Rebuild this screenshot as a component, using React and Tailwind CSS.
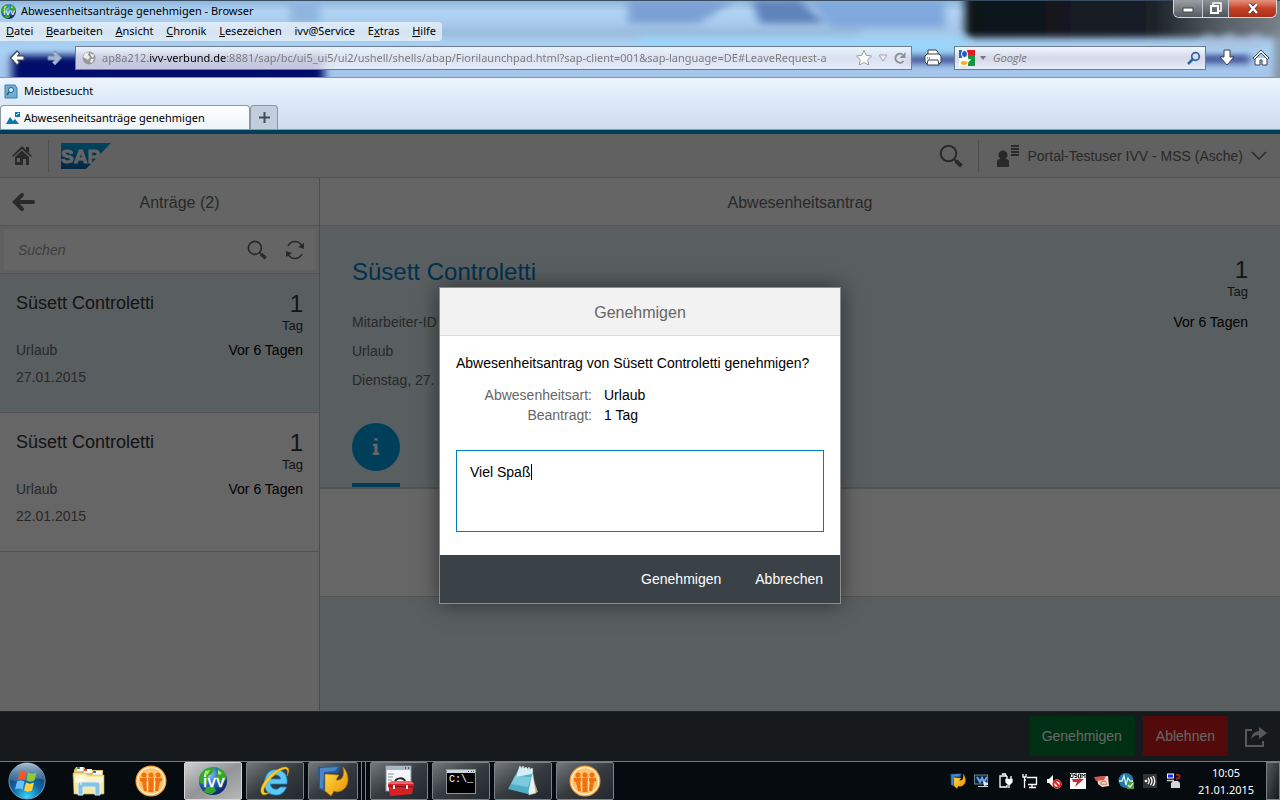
const menu = [
  ["", "D", "atei"],
  ["", "B", "earbeiten"],
  ["", "A", "nsicht"],
  ["", "C", "hronik"],
  ["", "L", "esezeichen"],
  ["ivv@Service", "", ""],
  ["E", "x", "tras"],
  ["", "H", "ilfe"],
];

const requests = [
  { name: "Süsett Controletti", days: "1", unit: "Tag", type: "Urlaub", age: "Vor 6 Tagen", date: "27.01.2015", selected: true },
  { name: "Süsett Controletti", days: "1", unit: "Tag", type: "Urlaub", age: "Vor 6 Tagen", date: "22.01.2015", selected: false },
];

function Globe({ size }) {
  return (
    <svg width={size} height={size} viewBox="0 0 32 32" aria-hidden="true">
      <defs>
        <radialGradient id="globeSea" cx="0.35" cy="0.25" r="0.8">
          <stop offset="0" stopColor="#9fd4ff" />
          <stop offset="0.45" stopColor="#2169c4" />
          <stop offset="1" stopColor="#0a2260" />
        </radialGradient>
      </defs>
      <circle cx="16" cy="16" r="14" fill="url(#globeSea)" />
      <path d="M6 6C10 2 15 2 17 4L15 9L11 11L12 16L8 20L3 18C1 14 3 9 6 6ZM20 3C26 4 30 9 29 14L26 18L21 15L19 10L22 7ZM10 22L17 21L19 26L15 29C12 29 8 28 7 26Z" fill="#35a52c" />
      <path d="M8 6L13 5L11 9L7 11ZM21 5L25 8L23 10L21 9Z" fill="#a2ec63" />
      <text x="17" y="22" textAnchor="middle" fill="#fff" stroke="#fff" strokeWidth="0.4" fontFamily="DejaVu Sans, sans-serif" fontSize="15">ivv</text>
    </svg>
  );
}

function People() {
  return (
    <svg width="32" height="32" viewBox="0 0 32 32" aria-hidden="true">
      <circle cx="16" cy="16" r="15.500" fill="#f39a35" />
      <circle cx="16" cy="16" r="14.300" fill="#fff3d4" />
      <circle cx="16" cy="16" r="12.800" fill="#ffc067" />
      <g fill="#f2700f">
        <circle cx="9" cy="10" r="2.500" /><circle cx="16" cy="10" r="2.500" /><circle cx="23" cy="10" r="2.500" />
        <path d="M5 13H12V16L11 17L12 26H9L7 17L5 16ZM13 13H19L18.500 17V27H13.500V17ZM20 13H27V16L25 17L23 26H20L21 17L20 16Z" />
      </g>
      <path d="M12.500 13V26M19.500 13V26" stroke="#ffe0a0" strokeWidth="1" />
    </svg>
  );
}

function ArrowApp({ size }) {
  return (
    <svg width={size} height={size} viewBox="0 0 32 32" aria-hidden="true">
      <defs>
        <linearGradient id="goldArrow" x1="0" y1="0" x2="1" y2="1">
          <stop offset="0" stopColor="#ffe24a" /><stop offset="1" stopColor="#e88d00" />
        </linearGradient>
      </defs>
      <path d="M1 2L23 1L21 8H10L9 27L2 24Z" fill="#235a9e" />
      <path d="M3 3L21 2L18 6L7 7L6 24L3 23Z" fill="#4d86c6" />
      <path d="M8 9L22 10L19 15C25 16 28 11 26 2C33 9 34 25 20 27L17 26L14 31L8 26Z" fill="url(#goldArrow)" stroke="#b86b00" strokeWidth="0.600" />
    </svg>
  );
}

function StartOrb() {
  return (
    <svg width="38" height="38" viewBox="0 0 38 38" aria-hidden="true">
      <defs>
        <radialGradient id="orb" cx="0.5" cy="0.95" r="0.9">
          <stop offset="0" stopColor="#35d6ff" /><stop offset="0.450" stopColor="#126aa8" /><stop offset="1" stopColor="#0a2e58" />
        </radialGradient>
        <linearGradient id="orbShine" x1="0" y1="0" x2="0" y2="1">
          <stop offset="0" stopColor="#e6f3fb" stopOpacity="0.750" /><stop offset="1" stopColor="#9cc6e0" stopOpacity="0.200" />
        </linearGradient>
      </defs>
      <circle cx="19" cy="19" r="18" fill="url(#orb)" stroke="#71a2bd" strokeWidth="1" />
      <path d="M2 18A17 17 0 0 1 36 18C27 14 11 22 2 18Z" fill="url(#orbShine)" />
      <path d="M12 9.500C14.500 8 16.500 8.500 18.500 10L17 18C14.500 16.500 12 16.500 9.500 18Z" fill="#f05a28" />
      <path d="M20 10.500C23 12 25.500 12 28.500 10.500L26.500 18.500C24 20 21 20 18.500 18.500Z" fill="#8dc63f" />
      <path d="M9 19.500C11.500 18 14.500 18.500 16.500 19.500L14.500 27.500C12 26 9.500 26 7 27.500Z" fill="#6cc0f8" />
      <path d="M18 20.500C20.500 22 23.500 22 26 20.500L24 28.500C21.500 30 18.500 30 16 28.500Z" fill="#ffd23a" />
    </svg>
  );
}

function Explorer() {
  return (
    <svg width="34" height="32" viewBox="0 0 34 32" aria-hidden="true">
      <path d="M2 5L4 2H12L14 5H31V29H2Z" fill="#dcc26c" />
      <rect x="5" y="2" width="6" height="4" fill="#fff" /><rect x="5" y="2" width="3" height="2" fill="#24a33b" />
      <rect x="12" y="4" width="8" height="4" fill="#fff" /><rect x="12" y="4" width="3" height="2" fill="#e0442c" />
      <rect x="21" y="6" width="9" height="4" fill="#fff" /><rect x="21" y="6" width="3" height="2" fill="#2a78c8" />
      <path d="M1 8H14L16 10H32V29H2Z" fill="#f6e9a3" stroke="#c4a855" strokeWidth="0.600" />
      <path d="M3 10H13L15 12H31V18H3Z" fill="#fcf5cb" />
      <path d="M6 30V20Q6 17 9 17H25Q28 17 28 20V30H23V22H11V30Z" fill="#86c3e3" stroke="#d7effb" strokeWidth="1" />
      <path d="M9 10V20M4 15H14" stroke="#fff" strokeWidth="1" />
    </svg>
  );
}

function IE() {
  return (
    <svg width="32" height="32" viewBox="0 0 32 32" aria-hidden="true">
      <path d="M28 19H11.500C12 25 19 25.500 21 22H27.500C25 29 20 30.500 16 30C8 29.500 5 24 5.500 17C6 9 11 4.500 17 4.500C25 5 29 10 28 19ZM12 14H21.500C21 8.500 12.500 8.500 12 14Z" fill="#5cc8f8" stroke="#1681bd" strokeWidth="0.800" />
      <path d="M28 11C32 4 29 0 22 3C11 7 -2 23 3 29C5 31 9 29 11 27C7 29 4 28 5 24C8 16 19 5 26 4C29 3.500 29 7 28 11Z" fill="#ffcb27" stroke="#d28b00" strokeWidth="0.500" />
    </svg>
  );
}

function Toolbox() {
  return (
    <svg width="32" height="32" viewBox="0 0 32 32" aria-hidden="true">
      <rect x="3" y="1" width="25" height="25" fill="#f5f7fa" stroke="#8592a2" />
      <path d="M3 1H28V5H3Z" fill="#a8b6c6" /><path d="M22 3H23M25 3H26" stroke="#345" strokeWidth="1.500" />
      <path d="M5 9H11M5 12H10M5 15H9M5 18H8" stroke="#8b95a0" />
      <path d="M12 18C12 12 22 12 22 17" fill="none" stroke="#222" strokeWidth="2" />
      <path d="M5 19L9 16H28L31 19L29 29L7 31Z" fill="#d72027" />
      <path d="M5 19L9 16H28L31 19Z" fill="#f0656a" /><path d="M5 21L30 22" stroke="#7e0e12" />
      <path d="M11 20V24M24 20V24" stroke="#eee" strokeWidth="2" />
    </svg>
  );
}

function Terminal() {
  return (
    <svg width="32" height="32" viewBox="0 0 32 32" aria-hidden="true">
      <rect x="1.500" y="4.500" width="29" height="24" fill="#000" stroke="#8b9298" />
      <rect x="2" y="5" width="28" height="3" fill="#cdd5de" /><path d="M23 6.500H24M26 6.500H27M28 6.500H29" stroke="#456" />
      <text x="4" y="17" fill="#fff" fontFamily="Liberation Mono, monospace" fontSize="10">C:\_</text>
    </svg>
  );
}

function Notepad() {
  return (
    <svg width="32" height="32" viewBox="0 0 32 32" aria-hidden="true">
      <path d="M23 5L31 27L25 29Z" fill="#c5a360" />
      <path d="M12 2L25 4L29 28L22 30Z" fill="#e9f1f4" stroke="#9fb2ba" strokeWidth="0.500" />
      <path d="M12 3L26 5L21 29L1 24Z" fill="#4fafc6" /><path d="M12 3L26 5L25 9L9 12Z" fill="#d4eef2" />
      <path d="M8 11L24 12L21 22L4 19Z" fill="#9bdce8" opacity="0.600" />
      <path d="M13 1V4M16 1V4M19 2V5M22 2V5M25 3V6" stroke="#f1f1f1" strokeWidth="1.200" />
    </svg>
  );
}

function Tray({ kind }) {
  if (kind === "arrow") return <ArrowApp size={16} />;
  return (
    <svg width="16" height="16" viewBox="0 0 16 16" aria-hidden="true">
      {kind === "desk" && <g><rect x="0.500" y="2" width="13" height="9" fill="#13243a" stroke="#6c7f92" /><path d="M3 4L6 9L8 5L10 9L13 4" stroke="#63a8ee" strokeWidth="2" fill="none" /><path d="M4 13H14V14H4Z" fill="#cfd8df" /><path d="M9 8L14 10V12L10 13Z" fill="#d8e8f5" /></g>}
      {kind === "power" && <g fill="none" stroke="#fff" strokeWidth="1.300"><path d="M4.500 2V1H7.500V3H9M3 3H2V14H9V12M3 3H9" /><path d="M9 3V6M13 3V6M8 6.500H14V9L12 11H10L8 9ZM11 11V15" fill="#fff" /></g>}
      {kind === "network" && <g fill="none" stroke="#fff" strokeWidth="1.300"><path d="M5 4.500H14.500V11.500H6M10 12V14M7 14.500H14M2.500 4V15M1 1V4H4V1M2.500 4V7H4" /></g>}
      {kind === "sound" && <g><path d="M1 6H3L7 2V14L3 10H1Z" fill="#fff" /><circle cx="11" cy="11" r="4.500" fill="#fff" /><circle cx="11" cy="11" r="3.600" fill="none" stroke="#da2822" strokeWidth="2" /><path d="M8.500 8.500L13.500 13.500" stroke="#da2822" strokeWidth="1.800" /></g>}
      {kind === "osd" && <g><rect width="16" height="16" fill="#fff" /><path d="M0.500 1H3V4.500H0.500ZM7 1H4.500V2.500H7V4.500H4.500M8.500 5V1H10.500V5ZM12 5V1L13.500 3L15 1V5" fill="none" stroke="#222" /><path d="M2 6H14L5 14L7 9H3Z" fill="#d9262c" /></g>}
      {kind === "card" && <g><path d="M3 4L14 3L15 13L8 14L4 11Z" fill="#f4d7ca" /><path d="M0 4L12 3L10 7L2 8Z" fill="#d85646" /><path d="M6 10Q10 4 13 10V12H7Z" fill="#d4917b" /><path d="M8 10H12" stroke="#fff" /></g>}
      {kind === "pulse" && <g><circle cx="8" cy="7.500" r="7.500" fill="#2579a8" /><path d="M1 8H4L6 3L8 12L10 5L12 8H15" fill="none" stroke="#d7f3ff" strokeWidth="1.300" /><rect x="9" y="9" width="7" height="7" fill="#3ea334" /><path d="M10 12L12 14L15 10" fill="none" stroke="#fff" strokeWidth="1.200" /></g>}
      {kind === "waves" && <g><rect x="1" y="1" width="14" height="14" fill="#333" /><g fill="none" stroke="#fff" strokeWidth="1.300"><circle cx="4" cy="8" r="0.700" /><path d="M6 5Q8.500 8 6 11M8.500 4Q11.500 8 8.500 12M11 3Q14.500 8 11 13" /></g></g>}
      {kind === "device" && <g><rect x="1.500" y="1" width="6" height="4" fill="#1228ff" stroke="#fff" /><path d="M1 7.500H8" stroke="#ccc" strokeWidth="1.500" /><path d="M10 2Q15 1 13 5L10 6" stroke="#a31d25" strokeWidth="2" fill="none" /><path d="M5 10L7 8H12L14 10V15H5Z" fill="#d5d5d5" /></g>}
    </svg>
  );
}

function Magnifier({ size }) {
  return (
    <svg width={size} height={size} viewBox="0 0 24 24" fill="none" stroke="currentColor" aria-hidden="true">
      <circle cx="9.500" cy="9.500" r="7.800" strokeWidth="2" />
      <path d="M15 15L17.500 17.500" strokeWidth="2" /><path d="M17 17L22.500 22" strokeWidth="4" />
    </svg>
  );
}

function BrowserChrome() {
  return (
    <header className="shrink-0 font-['Noto_Sans','Open_Sans',sans-serif] text-xs text-black">
      <div className="relative flex h-[78px] flex-col overflow-hidden border-b border-[#8295aa] bg-[#a6c8ec]">
        <svg className="absolute inset-0 h-full w-full" viewBox="0 0 1280 78" preserveAspectRatio="none" aria-hidden="true">
          <defs>
            <filter id="soft" filterUnits="userSpaceOnUse" x="-20" y="-30" width="1320" height="140"><feGaussianBlur stdDeviation="4" /></filter>
            <linearGradient id="glass" x1="0" y1="0" x2="0" y2="1"><stop offset="0" stopColor="#8eb4d8" /><stop offset="0.150" stopColor="#b0d3f4" /><stop offset="0.400" stopColor="#a4c6e8" /><stop offset="0.650" stopColor="#a9d2f4" /><stop offset="1" stopColor="#a4c4ea" /></linearGradient>
            <linearGradient id="dark" x1="0" y1="0" x2="1" y2="0"><stop offset="0" stopColor="#0b1118" /><stop offset="0.550" stopColor="#1a2027" /><stop offset="0.750" stopColor="#555d65" /><stop offset="1" stopColor="#868f96" /></linearGradient>
          </defs>
          <rect width="1280" height="78" fill="url(#glass)" />
          <g filter="url(#soft)">
            <path d="M290 0H320V24H290Z" fill="#8fb6e0" /><path d="M628 0H735L698 24H628Z" fill="#7ba0d4" />
            <path d="M752 0H800L825 24H760Z" fill="#5f83ba" /><path d="M810 0H945V28H830Z" fill="#80a8dc" />
            <rect x="0" y="31" width="860" height="4" fill="#8fb0d2" />
            <rect x="12" y="56" width="312" height="40" fill="#06106a" />
            <rect x="965" y="-20" width="340" height="58" fill="url(#dark)" />
            <rect x="905" y="56" width="345" height="8" fill="#303f8b" />
            <rect x="640" y="38" width="325" height="16" fill="#9bd5fa" />
            <path d="M1200 48L1208 34L1216 42L1230 34L1240 42L1258 34L1264 48Z" fill="#a9c1df" />
            <rect x="1275" y="30" width="10" height="60" fill="#808a98" />
          </g>
          <rect width="1280" height="1" fill="#384c62" />
        </svg>
        <div className="relative flex h-[22px] items-start justify-between pr-[3px]">
          <div className="flex items-center gap-1 pt-0.5"><Globe size={17} /><h1 className="text-[11px] leading-[18px]">Abwesenheitsanträge genehmigen - Browser</h1></div>
          <div className="flex h-[18px] overflow-hidden rounded-b-md border border-t-0 border-[#d5dadd] text-white">
            <button aria-label="Minimieren" className="flex w-[28px] items-center justify-center bg-gradient-to-b from-[#9b9fa3] to-[#545b62]"><svg width="12" height="10"><path d="M1 4H11V8H1Z" fill="#fff" stroke="#444" /></svg></button>
            <button aria-label="Wiederherstellen" className="flex w-[27px] items-center justify-center border-x border-[#c5cbd0] bg-gradient-to-b from-[#8c9298] to-[#4b535b]"><svg width="13" height="13" fill="none"><path d="M4 3V1H12V9H10" stroke="#fff" strokeWidth="1.500" /><rect x="2" y="4" width="7" height="7" stroke="#fff" strokeWidth="2" /><path d="M5 7H6" stroke="#444" /></svg></button>
            <button aria-label="Schließen" className="flex w-[47px] items-center justify-center bg-gradient-to-b from-[#e4927f] via-[#c64025] to-[#aa2f1c]"><svg width="12" height="11"><path d="M2 1L10 10M10 1L2 10" stroke="#493838" strokeWidth="4" /><path d="M2 1L10 10M10 1L2 10" stroke="#fff" strokeWidth="2.500" /></svg></button>
          </div>
        </div>
        <nav aria-label="Menü" className="relative flex h-[19px] w-[442px] items-center justify-between rounded-r bg-white/60 px-1.5 text-[11px]">
          {menu.map(([a, b, c]) => <button key={a + b + c}>{a}<span className="underline">{b}</span>{c}</button>)}
        </nav>
        <div className="relative flex h-[34px] items-center pr-2.5 pl-2">
          <button aria-label="Zurück" className="w-[34px]"><svg width="20" height="18" viewBox="0 0 18 18"><path d="M1.500 9L8 2L10.500 4.500L8.500 7H15V11H8.500L10.500 13.500L8 16Z" fill="#fff" stroke="#3c4959" strokeWidth="1.200" strokeLinejoin="round" /></svg></button>
          <button aria-label="Vor" className="w-[33px] pl-0.5"><svg width="20" height="18" viewBox="0 0 18 18"><path d="M16.500 9L10 2L7.500 4.500L9.500 7H3V11H9.500L7.500 13.500L10 16Z" fill="#a3b4d5" stroke="#718bb2" strokeLinejoin="round" /></svg></button>
          <div className="flex h-6 min-w-0 flex-1 items-center border border-[#6b7b94] bg-[linear-gradient(#ffffffc0,#e4e4f0e0,#f0f2fcd0)] pr-1 pl-1.5">
            <svg width="14" height="14" viewBox="0 0 14 14"><circle cx="7" cy="7" r="6.500" fill="#98999b" /><path d="M3 2L7 1L6 4L8 6L6 9L3 7L1 6ZM8 2L12 4L11 7L9 5ZM9 8L12 8L10 12L8 11Z" fill="#ececec" /></svg>
            <input aria-label="Adresse" readOnly value="ap8a212.ivv-verbund.de:8881/sap/bc/ui5_ui5/ui2/ushell/shells/abap/Fiorilaunchpad.html?sap-client=001&sap-language=DE#LeaveRequest-a" className="ml-1.5 min-w-0 flex-1 bg-[linear-gradient(90deg,#777_46px,#000_46px,#000_125px,#777_125px)] bg-clip-text text-[11px] text-transparent outline-none" />
            <svg className="ml-1" width="18" height="18" viewBox="0 0 18 18"><path d="M9 1.500L11.300 6.300L16.500 7L12.700 10.700L13.700 16L9 13.500L4.300 16L5.300 10.700L1.500 7L6.700 6.300Z" fill="#fff" stroke="#9b9da3" /></svg>
            <svg className="ml-1" width="12" height="12" viewBox="0 0 12 12"><path d="M2 3H10L6 9Z" fill="#eee" stroke="#a9acb4" /></svg>
            <svg className="ml-1" width="14" height="14" viewBox="0 0 14 14"><path d="M10.500 10A4.500 4.500 0 1 1 9.500 3.500" fill="none" stroke="#8b909a" strokeWidth="2" /><path d="M12.500 1V7H6.500Z" fill="#8b909a" /></svg>
          </div>
          <button aria-label="Drucken" className="flex w-[42px] justify-center"><svg width="20" height="20" viewBox="0 0 20 20" fill="#fff" stroke="#39434f"><path d="M5 7V2H13L15 4V7" /><path d="M2 8L4 6H16L18 8V14L16 16H4L2 14Z" /><path d="M5 12H15L16 17H4Z" /><path d="M4 10H7" strokeDasharray="1 1" /></svg></button>
          <div className="flex h-6 w-[252px] shrink-0 items-center border border-[#6b7b94] bg-[linear-gradient(#ffffffd0,#e4e4f0e8,#f0f2fce0)] px-1">
            <svg width="16" height="16" viewBox="0 0 16 16"><rect width="16" height="16" fill="#fff" /><path d="M8 0H16V5H8Z" fill="#e41b23" /><path d="M9 5H16V16H9Z" fill="#159640" /><path d="M0 0H3V8H0Z" fill="#2561bd" /><ellipse cx="5.500" cy="4" rx="3" ry="3.500" fill="#2458c1" stroke="#fff" /><path d="M7 7Q8 9 12 9Q10 13 9 12L5 8Z" fill="#fff" /><ellipse cx="5" cy="13" rx="4" ry="2.500" fill="#f3b315" stroke="#fff" /></svg>
            <svg className="ml-1" width="8" height="6"><path d="M1 1H7L4 5Z" fill="#777" /></svg>
            <input aria-label="Suche" placeholder="Google" className="ml-1.5 min-w-0 flex-1 bg-transparent font-['Open_Sans',sans-serif] text-[11px] italic outline-none placeholder:text-[#777]" />
            <svg width="15" height="15" viewBox="0 0 15 15" fill="none" stroke="#2b66a5"><circle cx="9.500" cy="5.500" r="3.800" strokeWidth="1.700" /><path d="M7 8L2 13" strokeWidth="2.500" /></svg>
          </div>
          <button aria-label="Downloads" className="flex w-[42px] justify-center"><svg width="18" height="18" viewBox="0 0 18 18"><path d="M6 1H12V8H16L9 16L2 8H6Z" fill="#fff" stroke="#39434f" strokeLinejoin="round" /></svg></button>
          <button aria-label="Startseite" className="w-[22px] pl-1"><svg width="18" height="18" viewBox="0 0 18 18" fill="#fff" stroke="#39434f"><path d="M3 9V16H8V11H10V16H15V9" /><path d="M1 9L9 1L17 9L15.500 10.500L9 4L2.500 10.500Z" /></svg></button>
        </div>
      </div>
      <div className="bg-gradient-to-b from-[#edf4fd] via-[#d9e8f7] to-[#cfdceb]">
        <div className="flex h-[27px] items-center gap-1.5 px-1">
          <svg width="14" height="16" viewBox="0 0 14 16"><path d="M1 1H11L13 4V14H1Z" fill="#6daed4" stroke="#3e7ea7" /><circle cx="7" cy="6" r="2.500" fill="#d9f0fc" stroke="#265f86" /><path d="M5 8L3 11" stroke="#265f86" strokeWidth="1.500" /></svg>
          <button className="text-[11px]">Meistbesucht</button>
        </div>
        <div role="tablist" className="flex h-[25px] border-b border-[#8d9cac]">
          <button role="tab" aria-selected="true" className="flex w-[250px] items-center gap-1 rounded-t-sm border border-b-0 border-[#8d96a3] bg-gradient-to-b from-white to-[#edf3fa] pt-0.5 pl-[5px] text-[11px]">
            <svg width="14" height="14" viewBox="0 0 14 14"><path d="M0 12L4 5L7 9L9 7L13 12Z" fill="#0878ad" /><rect x="9" width="5" height="5" fill="#0878ad" /><path d="M10 3L13 1" stroke="#fff" /></svg>
            Abwesenheitsanträge genehmigen
          </button>
          <button aria-label="Neuer Tab" className="flex w-7 items-center justify-center rounded-t-sm border border-b-0 border-[#8d96a3] bg-[#c1cedb]"><svg width="11" height="11"><path d="M5.500 0V11M0 5.500H11" stroke="#444c55" strokeWidth="2" /></svg></button>
        </div>
      </div>
    </header>
  );
}

function RequestItem({ item }) {
  return (
    <li className={item.selected ? "border-b border-[#cccccc] bg-[#deebf1]" : "border-b border-[#cccccc] bg-white"}>
      <a href="#antrag" className="flex h-[138px] flex-col px-4 pt-4">
        <div className="flex justify-between">
          <span className="pt-px text-lg leading-6 text-[#333]">{item.name}</span>
          <span className="text-right text-[#333]"><span className="block text-2xl leading-7">{item.days}</span><span className="block text-[13px] leading-4">{item.unit}</span></span>
        </div>
        <div className="mt-[3px] flex justify-between text-sm leading-[27px] text-[#666]"><span>{item.type}</span><span className="text-black">{item.age}</span></div>
        <span className="text-sm leading-[27px] text-[#666]">{item.date}</span>
      </a>
    </li>
  );
}

function Dialog() {
  return (
    <section role="dialog" aria-modal="true" aria-labelledby="dialog-title" className="flex w-[402px] flex-col border border-[#8c8c8c] bg-white shadow-[0_0_20px_rgba(0,0,0,0.5)]">
      <h2 id="dialog-title" className="flex h-12 items-center justify-center border-b border-[#ddd] bg-[#f2f2f2] pt-0.5 text-base text-[#666]">Genehmigen</h2>
      <div className="px-4 pt-[15px] pb-[23px] text-sm leading-5 text-black">
        <p className="leading-6">Abwesenheitsantrag von Süsett Controletti genehmigen?</p>
        <dl className="mt-2.5 grid grid-cols-[136px_1fr] gap-x-3">
          <dt className="text-right text-[#666]">Abwesenheitsart:</dt><dd>Urlaub</dd>
          <dt className="text-right text-[#666]">Beantragt:</dt><dd>1 Tag</dd>
        </dl>
        <div className="relative mt-[25px]">
          <textarea aria-label="Notiz" defaultValue="Viel Spaß" className="block h-[82px] w-full resize-none border border-[#007cc0] px-[13px] py-[11px] outline-none" />
          <span className="absolute top-[14px] left-[75px] h-4 w-px bg-black" />
        </div>
      </div>
      <footer className="flex h-12 items-center justify-end gap-[34px] bg-[#3a4247] pr-[17px] text-sm text-white [text-shadow:0_1px_1px_#000]"><button>Genehmigen</button><button>Abbrechen</button></footer>
    </section>
  );
}

function Portal() {
  return (
    <main className="relative flex flex-1 flex-col border-t-4 border-[#009de0] font-['Liberation_Sans',Arial,sans-serif] text-[#333]">
      <header className="flex h-11 shrink-0 items-center justify-between border-b border-[#ccc] bg-[#f2f2f2]">
        <div className="flex items-center">
          <button aria-label="Startseite" className="flex w-12 justify-center pr-1 text-[#666]"><svg width="22" height="22" viewBox="0 0 22 22"><path d="M1 11L11 1L15 5V2H18V8L21 11L20 12L11 4L2 12Z" fill="currentColor" /><path d="M11 5.500L18 12V20H15V14H12V20H4V12ZM6 13V17H9V13Z" fill="currentColor" fillRule="evenodd" /></svg></button>
          <span className="h-8 w-px bg-[#c4c4c4]" />
          <svg className="ml-3" width="50" height="26" viewBox="0 0 50 26" role="img" aria-label="SAP"><defs><linearGradient id="sap" x1="0" y1="0" x2="0" y2="1"><stop stopColor="#00b1eb" /><stop offset="1" stopColor="#0b62b0" /></linearGradient></defs><path d="M0 0H50L25 26H0Z" fill="url(#sap)" /><text x="0" y="20" fontFamily="Liberation Sans, Arial, sans-serif" fontSize="19" fontWeight="700" fill="#fff" stroke="#fff" strokeWidth="0.800">SAP</text></svg>
        </div>
        <div className="flex items-center text-[#666]">
          <button aria-label="Suchen" className="mr-[15px]"><Magnifier size={24} /></button>
          <span className="h-8 w-px bg-[#c4c4c4]" />
          <button className="flex items-center gap-2 pr-[13px] pl-4 text-sm">
            <svg width="24" height="24" viewBox="0 0 24 24" fill="#666"><circle cx="8" cy="11" r="4.500" /><path d="M2 23V18Q2 15 5 15H11Q14 15 14 18V23ZM16 1H24V3H16ZM16 4H24V6H16ZM16 7H24V9H16ZM16 10H24V12H16Z" /></svg>
            Portal-Testuser IVV - MSS (Asche)
            <svg width="16" height="10" viewBox="0 0 16 10" fill="none" stroke="#666" strokeWidth="1.500"><path d="M1 1L8 8L15 1" /></svg>
          </button>
        </div>
      </header>
      <div className="flex flex-1">
        <aside className="flex w-80 shrink-0 flex-col border-r border-[#bfbfbf] bg-[#fafafa]">
          <div className="flex h-12 items-center border-b border-[#ccc] bg-[#fdfdfd] text-[#666]">
            <button aria-label="Zurück" className="w-10 pl-3"><svg width="24" height="20" viewBox="0 0 24 20" fill="none" stroke="currentColor"><path d="M10 3L3 10L10 17" strokeWidth="4" strokeLinecap="round" /><path d="M3 10H21" strokeWidth="4" strokeLinecap="round" /></svg></button>
            <h2 className="flex-1 pt-0.5 text-center text-base">Anträge (2)</h2>
          </div>
          <div className="h-12 border-b border-[#ccc] bg-[#f0f0f0] p-1">
            <div className="flex h-10 items-center bg-[#fdfdfd] pr-2.5 pl-3.5 text-[#666]">
              <input aria-label="Suchen" placeholder="Suchen" className="min-w-0 flex-1 bg-transparent text-sm italic outline-none placeholder:text-[#999]" />
              <button aria-label="Suche starten" className="mr-[18px]"><Magnifier size={20} /></button>
              <button aria-label="Aktualisieren"><svg width="20" height="20" viewBox="0 0 20 20" fill="none" stroke="currentColor" strokeWidth="1.600"><path d="M3 6C6 0 14 0 17 6M17 14C14 20 6 20 3 14" /><path d="M13 7L19 3V9ZM7 13L1 17V11Z" fill="currentColor" stroke="none" /></svg></button>
            </div>
          </div>
          <ul>{requests.map((item) => <RequestItem key={item.date} item={item} />)}</ul>
        </aside>
        <section className="flex min-w-0 flex-1 flex-col bg-[#deebf1]">
          <h2 className="flex h-12 items-center justify-center border-b border-[#ccc] bg-[#fdfdfd] pt-0.5 text-base text-[#666]">Abwesenheitsantrag</h2>
          <div className="flex h-[263px] flex-col border-b-2 border-[#ccc] px-8 pt-[30px]">
            <div className="flex justify-between"><h3 className="text-2xl leading-8 text-[#007cc0]">Süsett Controletti</h3><div className="text-right"><div className="text-2xl leading-7">1</div><div className="text-[13px] leading-4">Tag</div></div></div>
            <div className="mt-2 flex justify-between text-sm leading-[29px] text-[#666]"><span>Mitarbeiter-ID</span><span className="text-black">Vor 6 Tagen</span></div>
            <p className="text-sm leading-[29px] text-[#666]">Urlaub</p><p className="text-sm leading-[29px] text-[#666]">Dienstag, 27. Januar 2015</p>
            <button aria-label="Informationen" className="mt-auto w-12 border-b-4 border-[#009de0] pb-3"><span className="flex h-12 w-12 items-center justify-center rounded-full bg-[#009de0]"><svg width="8" height="22" viewBox="0 0 10 22" fill="#fff"><path d="M3 0H7V3H3ZM1 7H7V18H9V21H1V18H3V10H1Z" /></svg></span></button>
          </div>
          <div className="h-[108px] border-b border-[#ccc] bg-white" />
        </section>
      </div>
      <footer className="flex h-[50px] shrink-0 items-center justify-end gap-2 border-t border-[#555] bg-[#3a4247] pr-3 pb-0.5 text-sm text-white">
        <button className="h-10 rounded-xs bg-[#007833] px-[13px]">Genehmigen</button><button className="h-10 rounded-xs bg-[#cc1919] px-[13px]">Ablehnen</button>
        <button aria-label="Teilen" className="ml-2 pt-0.5"><svg width="24" height="22" viewBox="0 0 24 22" fill="none" stroke="#ddd" strokeWidth="2"><path d="M8 4H2V20H19V15" /><path d="M15 1L23 7L15 13V9Q9 9 7 14Q7 6 15 5Z" fill="#ddd" stroke="none" /></svg></button>
      </footer>
      <div className="absolute inset-x-0 -top-1 bottom-0 flex items-center justify-center bg-black/60"><Dialog /></div>
    </main>
  );
}

function TaskButton({ label, active, children }) {
  return <button aria-label={label} className={active ? "flex h-[38px] w-[58px] items-center justify-center rounded-xs border border-[#d5d8da] bg-gradient-to-br from-[#cfcfcf] via-[#929497] to-[#b7b7b8]" : "flex h-[38px] w-[58px] items-center justify-center rounded-xs border border-[#7d8286] bg-gradient-to-br from-[#74787b] via-[#363b40] to-[#22282d]"}>{children}</button>;
}

function Taskbar() {
  return (
    <footer className="flex h-[39px] shrink-0 justify-between border-t border-[#747a7e] bg-[#060b10]">
      <div className="flex items-center">
        <button aria-label="Start" className="ml-2"><StartOrb /></button>
        <button aria-label="Explorer" className="ml-[26px]"><Explorer /></button>
        <button aria-label="Team" className="ml-[29px]"><People /></button>
        <div className="ml-[17px] flex gap-1">
          <TaskButton label="ivv" active><Globe size={32} /></TaskButton>
          <TaskButton label="Internet Explorer"><IE /></TaskButton>
          <span className="flex gap-0.5"><button aria-label="Anmeldung" className="flex h-[38px] w-[50px] items-center justify-center rounded-xs border border-[#7d8286] bg-gradient-to-br from-[#74787b] via-[#363b40] to-[#22282d]"><ArrowApp size={32} /></button><i className="w-0.5 border-r border-[#7d8286]" /><i className="w-0.5 border-r border-[#7d8286]" /></span>
          <TaskButton label="Werkzeuge"><Toolbox /></TaskButton>
          <TaskButton label="Eingabeaufforderung"><Terminal /></TaskButton>
          <TaskButton label="Editor"><Notepad /></TaskButton>
          <TaskButton label="Team"><People /></TaskButton>
        </div>
      </div>
      <div className="flex items-center">
        <div className="flex gap-2">{["arrow", "desk", "power", "network", "sound", "osd", "card", "pulse", "waves", "device"].map((kind) => <Tray key={kind} kind={kind} />)}</div>
        <time className="w-[84px] pl-1 text-center font-['Noto_Sans','Open_Sans',sans-serif] text-[11px] leading-[17px] text-white">10:05<br />21.01.2015</time>
        <button aria-label="Desktop anzeigen" className="h-[38px] w-3.5 border border-[#7b8083] bg-gradient-to-br from-[#575b5f] to-[#15191e]" />
      </div>
    </footer>
  );
}

export default function App() {
  return <div className="flex min-h-screen flex-col"><BrowserChrome /><Portal /><Taskbar /></div>;
}
